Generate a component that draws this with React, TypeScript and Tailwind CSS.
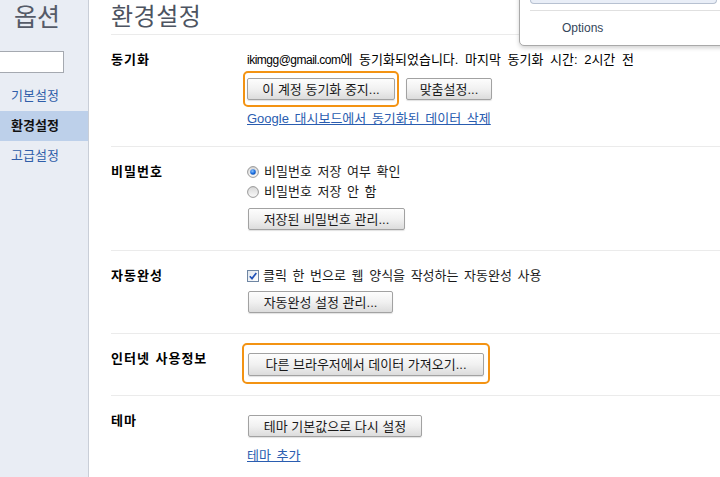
import React from "react";

function Btn({ className, children }: { className: string; children: React.ReactNode }) {
  return (
    <button
      className={
        "flex items-center justify-center border border-[#a2a2a2] rounded-[2px] bg-linear-to-b from-[#fdfdfd] via-[#f1f1f1] to-[#dcdcdc] text-[13px] leading-none text-[#1a1a1a] shadow-[0_1px_1px_rgba(0,0,0,0.12)] whitespace-nowrap " +
        className
      }
    >
      {children}
    </button>
  );
}

function Radio({ checked }: { checked: boolean }) {
  return (
    <svg width="12" height="12" viewBox="0 0 12 12" className="shrink-0">
      <defs>
        <linearGradient id={checked ? "rg1" : "rg2"} x1="0" y1="0" x2="0" y2="1">
          <stop offset="0" stopColor="#d6d6d6" />
          <stop offset="1" stopColor="#fbfbfb" />
        </linearGradient>
        <radialGradient id="rdot" cx="0.4" cy="0.35" r="0.7">
          <stop offset="0" stopColor="#8cc4ff" />
          <stop offset="0.6" stopColor="#1c6fe0" />
          <stop offset="1" stopColor="#0d4aa8" />
        </radialGradient>
      </defs>
      <circle cx="6" cy="6" r="5.4" fill={`url(#${checked ? "rg1" : "rg2"})`} stroke="#8d8d8d" strokeWidth="0.9" />
      {checked && <circle cx="6" cy="6" r="2.8" fill="url(#rdot)" />}
    </svg>
  );
}

function Check() {
  return (
    <svg width="12" height="12" viewBox="0 0 12 12" className="shrink-0">
      <defs>
        <linearGradient id="cbg" x1="0" y1="0" x2="1" y2="1">
          <stop offset="0" stopColor="#dfe6ee" />
          <stop offset="1" stopColor="#ffffff" />
        </linearGradient>
      </defs>
      <rect x="0.5" y="0.5" width="11" height="11" fill="url(#cbg)" stroke="#6f86a3" />
      <path d="M2.8 6.2 L5 8.6 L9.3 3" fill="none" stroke="#2152b8" strokeWidth="1.7" />
    </svg>
  );
}

export default function App() {
  return (
    <div className="relative flex h-[477px] w-[720px] overflow-hidden bg-white font-['Liberation_Sans','Noto_Sans_CJK_KR',sans-serif] text-black [word-spacing:2px]">
      {/* Sidebar */}
      <div className="w-[89px] shrink-0 border-r border-[#c9ced7] bg-[#e9edf4]">
        <div className="h-[34px] pl-[14px] text-[25px] leading-[34px] text-[#555b68]">옵션</div>
        <div className="mt-[17px] -ml-[2px] h-[22px] w-[66px] border border-[#a5a9b0] bg-white" />
        <div className="mt-[8px] flex flex-col text-[13px]">
          <div className="flex h-[30px] items-center pl-[11px] text-[#2f5ea9]">기본설정</div>
          <div className="flex h-[30px] items-center bg-[#bdd0ea] pl-[11px] font-bold text-[#111]">환경설정</div>
          <div className="flex h-[30px] items-center pl-[11px] text-[#2f5ea9]">고급설정</div>
        </div>
      </div>

      {/* Main */}
      <div className="flex-1 pl-[22px]">
        <div className="h-[34px] text-[24px] tracking-[0.5px] leading-[34px] text-[#4d5461]">환경설정</div>

        {/* 동기화 */}
        <div className="flex border-t border-[#ebebeb] pt-[16px] pb-[18px]">
          <div className="w-[136px] shrink-0 text-[13px] font-bold tracking-[1px] leading-[18px]">동기화</div>
          <div className="flex flex-col items-start">
            <div className="text-[13px] leading-[18px] whitespace-nowrap [word-spacing:3px]">
              <span className="text-[12px] tracking-[-0.5px]">ikimgg@gmail.com</span>에 동기화되었습니다. 마지막 동기화 시간: 2시간 전
            </div>
            <div className="mt-[9px] flex gap-[11px]">
              <div className="relative">
                <span className="pointer-events-none absolute -left-[4px] -right-[4px] -top-[7px] -bottom-[7px] rounded-[5px] border-2 border-[#f39313]" />
                <Btn className="h-[22px] w-[148px]">이 계정 동기화 중지...</Btn>
              </div>
              <Btn className="h-[22px] w-[86px]">맞춤설정...</Btn>
            </div>
            <a className="mt-[10px] text-[13px] leading-[18px] text-[#2a5db0] underline">
              Google 대시보드에서 동기화된 데이터 삭제
            </a>
          </div>
        </div>

        {/* 비밀번호 */}
        <div className="flex border-t border-[#ebebeb] pt-[16px] pb-[20px]">
          <div className="w-[136px] shrink-0 text-[13px] font-bold tracking-[1px] leading-[18px]">비밀번호</div>
          <div className="flex flex-col items-start">
            <div className="flex h-[18px] items-center gap-[5px] text-[13px] leading-[18px] text-[#1a1a1a]">
              <Radio checked={true} />
              <span>비밀번호 저장 여부 확인</span>
            </div>
            <div className="mt-[2px] flex h-[18px] items-center gap-[5px] text-[13px] leading-[18px] text-[#1a1a1a]">
              <Radio checked={false} />
              <span>비밀번호 저장 안 함</span>
            </div>
            <Btn className="ml-[1px] mt-[7px] h-[22px] w-[157px]">저장된 비밀번호 관리...</Btn>
          </div>
        </div>

        {/* 자동완성 */}
        <div className="flex border-t border-[#ebebeb] pt-[16px] pb-[20px]">
          <div className="w-[136px] shrink-0 text-[13px] font-bold tracking-[1px] leading-[18px]">자동완성</div>
          <div className="flex flex-col items-start">
            <div className="flex h-[18px] items-center gap-[4px] text-[13px] leading-[18px] text-[#1a1a1a]">
              <Check />
              <span>클릭 한 번으로 웹 양식을 작성하는 자동완성 사용</span>
            </div>
            <Btn className="ml-[1px] mt-[6px] h-[22px] w-[145px]">자동완성 설정 관리...</Btn>
          </div>
        </div>

        {/* 인터넷 사용정보 */}
        <div className="flex border-t border-[#ebebeb] pt-[16px] pb-[19px]">
          <div className="w-[136px] shrink-0 text-[13px] font-bold tracking-[1px] leading-[18px] [word-spacing:1px]">인터넷 사용정보</div>
          <div className="flex flex-col items-start">
            <div className="relative ml-[1px] mt-[3px]">
              <span className="pointer-events-none absolute -left-[6px] -right-[6px] -top-[10px] -bottom-[8px] rounded-[5px] border-2 border-[#f39313]" />
              <Btn className="h-[23px] w-[236px]">다른 브라우저에서 데이터 가져오기...</Btn>
            </div>
          </div>
        </div>

        {/* 테마 */}
        <div className="flex border-t border-[#ebebeb] pt-[16px]">
          <div className="w-[136px] shrink-0 text-[13px] font-bold tracking-[1px] leading-[18px]">테마</div>
          <div className="flex flex-col items-start">
            <Btn className="ml-[1px] mt-[3px] h-[22px] w-[174px]">테마 기본값으로 다시 설정</Btn>
            <a className="mt-[10px] text-[13px] leading-[18px] text-[#2a5db0] underline">테마 추가</a>
          </div>
        </div>
      </div>

      {/* Top-right popup menu */}
      <div className="absolute left-[519px] -top-[10px] h-[56px] w-[215px] rounded-bl-[5px] border border-[#a9a9a9] bg-white shadow-[0_2px_4px_rgba(0,0,0,0.18)]">
        <div className="ml-[10px] h-[13px] w-[187px] rounded-b-[4px] border border-t-0 border-[#b7c1d1] bg-[#e9eef7]" />
        <div className="ml-[10px] mt-[6px] border-t border-[#e0e0e0]" />
        <div className="ml-[42px] mt-[10px] text-[12px] leading-[14px] text-[#34465a] [word-spacing:0px]">Options</div>
      </div>
    </div>
  );
}
